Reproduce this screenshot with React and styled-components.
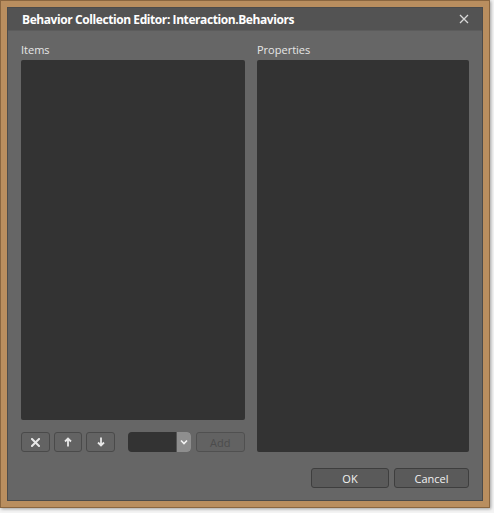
import React from "react";
import styled, { createGlobalStyle } from "styled-components";

const GlobalStyle = createGlobalStyle`
  html, body {
    margin: 0;
    padding: 0;
    background: #f4f4f4;
  }
  body {
    font-family: "Open Sans", "Noto Sans", "Liberation Sans", sans-serif;
  }
`;

const Page = styled.div`
  width: 494px;
  height: 513px;
  overflow: hidden;
`;

const Frame = styled.div`
  box-sizing: border-box;
  width: 490px;
  height: 508px;
  padding: 6px;
  background: #b98e5f;
  border: 1px solid #8a6640;
  box-shadow: 1px 1px 3px rgba(0, 0, 0, 0.35);
`;

const Dialog = styled.div`
  box-sizing: border-box;
  height: 100%;
  display: flex;
  flex-direction: column;
  background: #666666;
  border: 1px solid #4b4b4b;
`;

const TitleBar = styled.div`
  height: 22px;
  flex-shrink: 0;
  display: flex;
  align-items: center;
  justify-content: space-between;
  padding: 0 12px 0 14px;
  background: #535353;
  border-bottom: 1px solid #5c5c5c;
`;

const Title = styled.div`
  color: #ffffff;
  font-size: 12px;
  font-weight: 700;
  letter-spacing: -0.42px;
`;

const CloseButton = styled.button`
  border: none;
  background: none;
  padding: 0;
  width: 12px;
  height: 12px;
  display: flex;
  align-items: center;
  justify-content: center;
  cursor: pointer;
`;

const Body = styled.div`
  flex: 1;
  display: flex;
  gap: 12px;
  padding: 12px 13px 0 13px;
`;

const Column = styled.div`
  width: ${(p) => p.width}px;
  display: flex;
  flex-direction: column;
`;

const Label = styled.div`
  height: 16px;
  line-height: 14px;
  margin-bottom: 1px;
  color: #e6e6e6;
  font-size: 11px;
`;

const ListBox = styled.div`
  height: ${(p) => p.height}px;
  background: #333333;
  border-radius: 2px;
`;

const Toolbar = styled.div`
  display: flex;
  align-items: center;
  margin-top: 12px;
  height: 20px;
`;

const IconButton = styled.button`
  box-sizing: border-box;
  width: 29px;
  height: 20px;
  margin-right: 4px;
  padding: 0;
  display: flex;
  align-items: center;
  justify-content: center;
  background: #636363;
  border: 1px solid #4a4a4a;
  border-radius: 3px;
  cursor: pointer;
`;

const Combo = styled.div`
  box-sizing: border-box;
  width: 63px;
  height: 20px;
  margin-left: 9px;
  margin-right: 5px;
  display: flex;
  justify-content: flex-end;
  background: #333333;
  border-radius: 4px;
  overflow: hidden;
`;

const ComboArrow = styled.div`
  width: 14px;
  height: 20px;
  display: flex;
  align-items: center;
  justify-content: center;
  background: #8e8e8e;
  border-left: 1px solid #555;
`;

const TextButton = styled.button`
  box-sizing: border-box;
  width: ${(p) => p.width}px;
  height: 20px;
  padding: 0;
  background: ${(p) => (p.disabled ? "#626262" : "#5a5a5a")};
  border: 1px solid ${(p) => (p.disabled ? "#505050" : "#3e3e3e")};
  border-radius: 3px;
  color: ${(p) => (p.disabled ? "#4c4c4c" : "#f2f2f2")};
  font-family: "Open Sans", "Noto Sans", "Liberation Sans", sans-serif;
  font-size: 11px;
  cursor: pointer;
`;

const Footer = styled.div`
  display: flex;
  justify-content: flex-end;
  gap: 5px;
  padding: 15px 13px 12px 0;
`;

const CrossIcon = () => (
  <svg width="9" height="9" viewBox="0 0 9 9">
    <path d="M1 1L8 8M8 1L1 8" stroke="#e8e8e8" strokeWidth="2" strokeLinecap="square" />
  </svg>
);

const UpIcon = () => (
  <svg width="8" height="10" viewBox="0 0 8 10">
    <path d="M4 9.5V2M1 4.5L4 1.5L7 4.5" stroke="#e8e8e8" strokeWidth="1.8" fill="none" />
  </svg>
);

const DownIcon = () => (
  <svg width="8" height="10" viewBox="0 0 8 10">
    <path d="M4 0.5V8M1 5.5L4 8.5L7 5.5" stroke="#e8e8e8" strokeWidth="1.8" fill="none" />
  </svg>
);

const ChevronIcon = () => (
  <svg width="8" height="6" viewBox="0 0 8 6">
    <path d="M1 1.5L4 4.5L7 1.5" stroke="#f4f4f4" strokeWidth="1.6" fill="none" />
  </svg>
);

const CloseIcon = () => (
  <svg width="10" height="10" viewBox="0 0 10 10">
    <path d="M1 1L9 9M9 1L1 9" stroke="#d8d8d8" strokeWidth="1.3" />
  </svg>
);

export default function App() {
  return (
    <Page>
      <GlobalStyle />
      <Frame>
        <Dialog>
          <TitleBar>
            <Title>Behavior Collection Editor: Interaction.Behaviors</Title>
            <CloseButton>
              <CloseIcon />
            </CloseButton>
          </TitleBar>
          <Body>
            <Column width={224}>
              <Label>Items</Label>
              <ListBox height={360} />
              <Toolbar>
                <IconButton>
                  <CrossIcon />
                </IconButton>
                <IconButton>
                  <UpIcon />
                </IconButton>
                <IconButton>
                  <DownIcon />
                </IconButton>
                <Combo>
                  <ComboArrow>
                    <ChevronIcon />
                  </ComboArrow>
                </Combo>
                <TextButton width={50} disabled>
                  Add
                </TextButton>
              </Toolbar>
            </Column>
            <Column width={212}>
              <Label>Properties</Label>
              <ListBox height={392} />
            </Column>
          </Body>
          <Footer>
            <TextButton width={78}>OK</TextButton>
            <TextButton width={75}>Cancel</TextButton>
          </Footer>
        </Dialog>
      </Frame>
    </Page>
  );
}
